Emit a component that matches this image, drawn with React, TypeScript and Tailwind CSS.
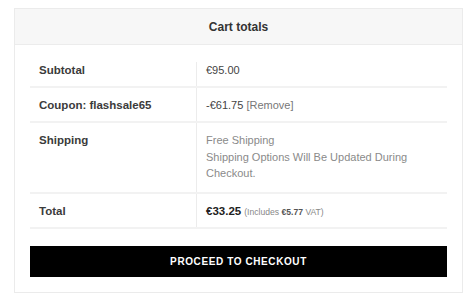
const font = { fontFamily: '"Liberation Sans", Arial, sans-serif' };

const Row = ({
    label,
    children,
    className = '',
    first = false,
}: {
    label: string;
    children: React.ReactNode;
    className?: string;
    first?: boolean;
}) => (
    <div className={`grid grid-cols-[166px_1fr] border-b-2 border-[#f2f2f2] ${className}`}>
        <div className="pl-[9px] pt-[9px] text-[11.5px] leading-[16.5px] font-bold text-[#3b3b3b]">
            {label}
        </div>
        <div
            className={`border-l border-[#ececec] pl-[9px] text-[11px] leading-[16.5px] text-[#444] ${first ? 'mt-[9px] pt-0' : 'pt-[9px]'}`}
        >
            {children}
        </div>
    </div>
);

export default function App() {
    return (
        <div className="w-[475px] h-[298px] bg-white pt-[8px] pl-[14px]" style={font}>
            <div className="w-[449px] h-[285px] border border-[#ebebeb] flex flex-col">
                <div className="h-[36px] shrink-0 bg-[#f7f7f7] border-b border-[#ececec] flex items-center justify-center text-[12px] font-bold text-[#333]">
                    Cart totals
                </div>

                <div className="px-[15px] pt-[8px]">
                    <Row label="Subtotal" className="h-[35px]" first>
                        €95.00
                    </Row>
                    <Row label="Coupon: flashsale65" className="h-[35px]">
                        -€61.75 <span className="text-[#777]">[Remove]</span>
                    </Row>
                    <Row label="Shipping" className="h-[71px]">
                        <div className="text-[#8a8a8a]">
                            Free Shipping
                            <br />
                            Shipping Options Will Be Updated During
                            <br />
                            Checkout.
                        </div>
                    </Row>
                    <Row label="Total" className="h-[35px]">
                        <span className="font-bold text-[#222] text-[11.5px]">€33.25</span>{' '}
                        <span className="text-[8.6px] text-[#888]">
                            (Includes <span className="font-bold text-[#555]">€5.77</span> VAT)
                        </span>
                    </Row>

                    <button className="mt-[17px] w-full h-[31px] bg-black text-white text-[10px] font-bold tracking-[0.6px] uppercase flex items-center justify-center">
                        Proceed to checkout
                    </button>
                </div>
            </div>
        </div>
    );
}
